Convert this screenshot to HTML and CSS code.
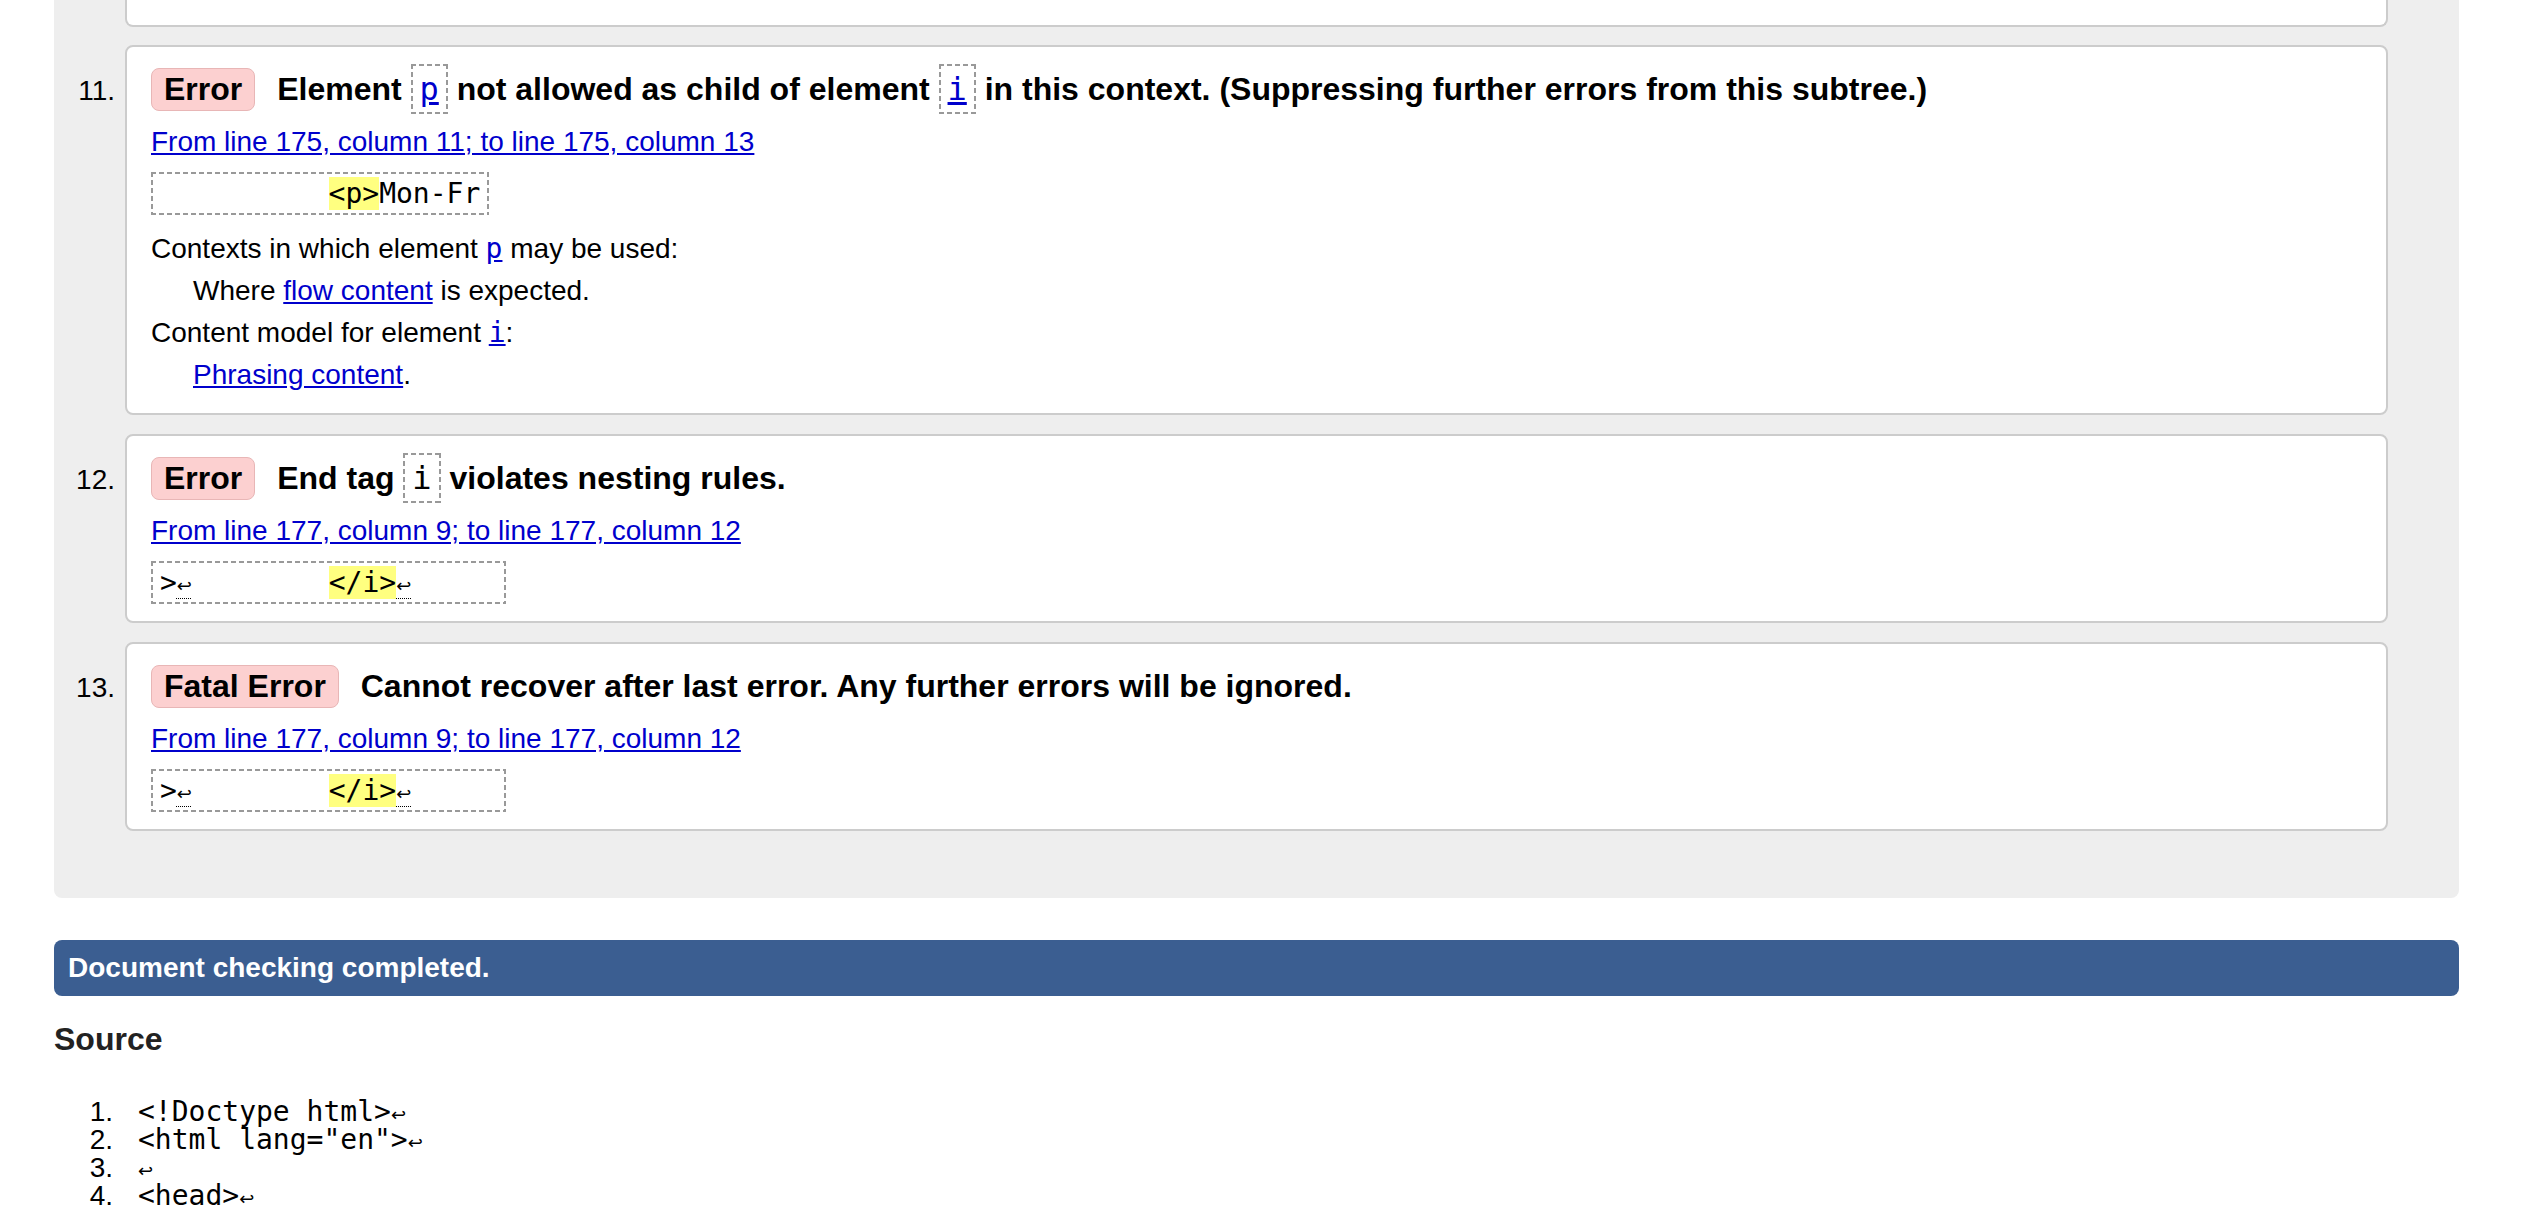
FILE: index.html
```html
<!DOCTYPE html>
<html lang="en">
<head>
<meta charset="utf-8">
<title>Showing results</title>
<link rel="stylesheet" href="styles.css">
</head>
<body>
<div class="page">
  <section class="results">
    <ol class="messages">
      <li class="msg msg-cut"><span class="num"></span><div class="card card-cut"></div></li>
      <li class="msg">
        <span class="num">11.</span>
        <div class="card">
          <p class="head"><strong class="badge">Error</strong> Element <code class="box dash"><a href="#">p</a></code> not allowed as child of element <code class="box dash"><a href="#">i</a></code> in this context. (Suppressing further errors from this subtree.)</p>
          <p class="loc"><a href="#">From line 175, column 11; to line 175, column 13</a></p>
          <div class="extract dash"><code>          <mark>&lt;p&gt;</mark>Mon-Fr</code></div>
          <dl class="details">
            <dt>Contexts in which element <a href="#"><code>p</code></a> may be used:</dt>
            <dd>Where <a href="#">flow content</a> is expected.</dd>
            <dt>Content model for element <a href="#"><code>i</code></a>:</dt>
            <dd><a href="#">Phrasing content</a>.</dd>
          </dl>
        </div>
      </li>
      <li class="msg">
        <span class="num">12.</span>
        <div class="card">
          <p class="head"><strong class="badge">Error</strong> End tag <code class="box dash">i</code> violates nesting rules.</p>
          <p class="loc"><a href="#">From line 177, column 9; to line 177, column 12</a></p>
          <div class="extract dash"><code>&gt;<span class="lf">↩</span>        <mark>&lt;/i&gt;</mark><span class="lf">↩</span>     </code></div>
        </div>
      </li>
      <li class="msg">
        <span class="num">13.</span>
        <div class="card">
          <p class="head"><strong class="badge">Fatal Error</strong> Cannot recover after last error. Any further errors will be ignored.</p>
          <p class="loc"><a href="#">From line 177, column 9; to line 177, column 12</a></p>
          <div class="extract dash"><code>&gt;<span class="lf">↩</span>        <mark>&lt;/i&gt;</mark><span class="lf">↩</span>     </code></div>
        </div>
      </li>
    </ol>
  </section>

  <p class="status">Document checking completed.</p>

  <h2 class="src-title">Source</h2>
  <ol class="source">
    <li><span class="src-num">1.</span><code>&lt;!Doctype html&gt;<span class="nl">↩</span></code></li>
    <li><span class="src-num">2.</span><code>&lt;html lang="en"&gt;<span class="nl">↩</span></code></li>
    <li><span class="src-num">3.</span><code><span class="nl">↩</span></code></li>
    <li><span class="src-num">4.</span><code>&lt;head&gt;<span class="nl">↩</span></code></li>
  </ol>
</div>
</body>
</html>
```
FILE: styles.css
```css
html, body {
  margin: 0;
  padding: 0;
  background: #fff;
}

body {
  font-family: "Liberation Sans", Arial, Helvetica, sans-serif;
  font-size: 28px;
  color: #000;
}

a {
  color: #0000cc;
}

code {
  font-family: "DejaVu Sans Mono", Menlo, monospace;
  font-size: 1em;
}

.page {
  margin: 0 78px 0 54px;
}

/* grey results panel */
.results {
  background: #eeeeee;
  border-radius: 0 0 8px 8px;
  padding: 0 71px 67px 0;
}

.messages {
  list-style: none;
  margin: 0;
  padding: 0;
}

.msg {
  display: flex;
  align-items: baseline;
  margin-bottom: 19px;
}

.msg:last-child {
  margin-bottom: 0;
}

.msg-cut {
  align-items: flex-start;
  margin-bottom: 18px;
}

.num {
  flex: 0 0 71px;
  box-sizing: border-box;
  padding-right: 10px;
  text-align: right;
  line-height: 32px;
}

.card {
  flex: 1 1 auto;
  min-width: 0;
  background: #fff;
  border: 2px solid #cccccc;
  border-radius: 8px;
  padding: 17px 24px;
}

.card-cut {
  height: 25px;
  padding: 0;
  border-top: none;
  border-radius: 0 0 8px 8px;
}

/* dashed frame drawn with gradients: 5px dashes, 3px gaps, 2px thick */
.dash {
  background-color: #fff;
  background-image:
    repeating-linear-gradient(90deg, #999 0 5px, transparent 5px 8px),
    repeating-linear-gradient(90deg, #999 0 5px, transparent 5px 8px),
    repeating-linear-gradient(180deg, #999 0 5px, transparent 5px 8px),
    repeating-linear-gradient(180deg, #999 0 5px, transparent 5px 8px);
  background-size: 100% 2px, 100% 2px, 2px 100%, 2px 100%;
  background-position: 0 0, 0 100%, 0 0, 100% 0;
  background-repeat: no-repeat;
}

/* message heading */
.head {
  margin: 0;
  font-size: 32px;
  font-weight: bold;
  line-height: 51px;
}

.badge {
  display: inline-block;
  background: #fcd0d0;
  border: 1px solid #e8b6b6;
  border-radius: 8px;
  padding: 2px 12px;
  line-height: 37px;
  margin-right: 13px;
}

.box {
  display: inline-block;
  padding: 6px 9px;
  line-height: normal;
  font-weight: normal;
}

.loc {
  margin: 6px 0 0;
  line-height: 42px;
}

.extract {
  margin-top: 9px;
  width: fit-content;
  padding: 5px 9px;
  font-family: "DejaVu Sans Mono", Menlo, monospace;
  line-height: 33px;
  white-space: pre;
}

mark {
  background: #ffff80;
  color: inherit;
}

.lf {
  display: inline-block;
  width: 17px;
  line-height: 0;
  font-family: "DejaVu Sans", sans-serif;
  font-size: 18px;
  text-decoration: underline dotted 1px;
  text-underline-offset: 6px;
}

.details {
  margin: 13px 0 0;
  line-height: 42px;
}

.details dt,
.details dd {
  margin: 0;
}

.details dd {
  margin-left: 42px;
}

/* status bar */
.status {
  margin: 42px 0 0;
  background: #3b5e91;
  color: #fff;
  font-weight: bold;
  line-height: 32px;
  padding: 12px 14px;
  border-radius: 8px;
}

.src-title {
  margin: 25px 0 0;
  font-size: 32px;
  line-height: 37px;
  color: #222;
}

.source {
  list-style: none;
  margin: 40px 0 0;
  padding: 0;
  line-height: 28px;
}

.source li {
  display: flex;
  align-items: baseline;
}

.src-num {
  flex: none;
  width: 84px;
  box-sizing: border-box;
  padding-right: 25px;
  text-align: right;
}

.source code {
  white-space: pre;
}

.nl {
  font-family: "DejaVu Sans", sans-serif;
  font-size: 18px;
  line-height: 1;
}
```
